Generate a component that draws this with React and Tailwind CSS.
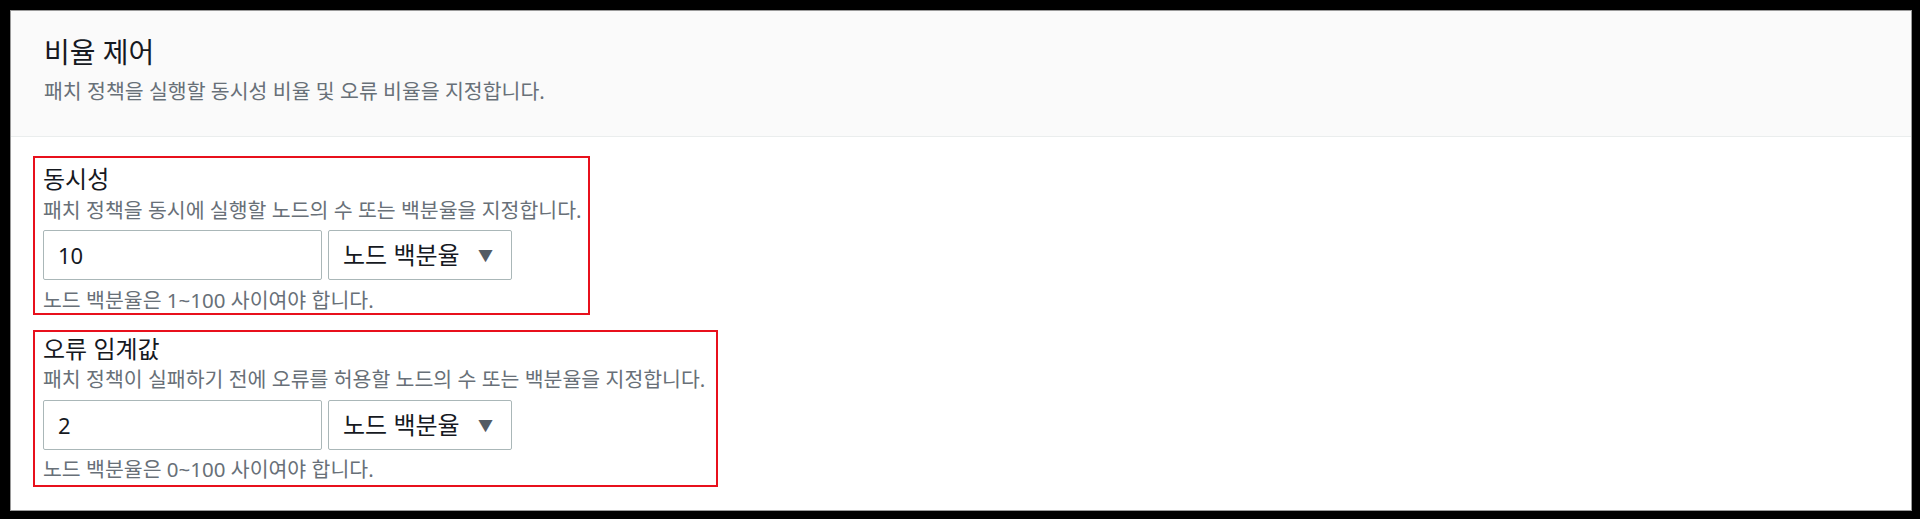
import React from 'react';

const font = { fontFamily: '"Noto Sans", "Noto Sans CJK KR", sans-serif' };

function Field({ width, spacing, label, description, value, hint }) {
  return (
    <div className={`${width} ${spacing.box} border-2 border-[#e8101c] pl-[8px]`}>
      <div className="text-[24px] leading-[30px] text-[#16191f]">{label}</div>
      <div className={`${spacing.desc} text-[20.5px] leading-[26px] text-[#687078]`}>{description}</div>
      <div className={`${spacing.input} flex gap-[6px]`}>
        <div className="w-[279px] h-[50px] border border-[#aab7b8] rounded-[2px] bg-white flex items-center pl-[14px] text-[22px] text-[#16191f]">
          {value}
        </div>
        <div className="w-[184px] h-[50px] border border-[#aab7b8] rounded-[2px] bg-white flex items-center justify-between pl-[14px] pr-[18px] text-[24px] text-[#16191f]">
          <span>노드 백분율</span>
          <span className="text-[15px] text-[#545b64]">▼</span>
        </div>
      </div>
      <div className={`${spacing.hint} text-[20.5px] leading-[26px] text-[#687078]`}>{hint}</div>
    </div>
  );
}

export default function App() {
  return (
    <div className="h-[519px] bg-black pt-[10px] pl-[10px] pr-[8px] pb-[8px]" style={font}>
      <div className="h-full border border-[#9a9a9a] bg-white flex flex-col">
        {/* Header */}
        <div className="bg-[#fafafa] border-b border-[#eaeded] pl-[33px] pt-[23px] pb-[32px]">
          <h2 className="text-[28px] leading-[36px] text-[#16191f]">비율 제어</h2>
          <p className="mt-[8px] text-[20.5px] leading-[26px] text-[#687078]">
            패치 정책을 실행할 동시성 비율 및 오류 비율을 지정합니다.
          </p>
        </div>

        {/* Body */}
        <div className="pl-[22px] pt-[19px] flex flex-col gap-[15px]">
          <Field
            width="w-[557px]"
            spacing={{ box: 'pt-[6px] pb-0', desc: 'mt-[3px]', input: 'mt-[7px]', hint: 'mt-[7px]' }}
            label="동시성"
            description="패치 정책을 동시에 실행할 노드의 수 또는 백분율을 지정합니다."
            value="10"
            hint="노드 백분율은 1~100 사이여야 합니다."
          />
          <Field
            width="w-[685px]"
            spacing={{ box: 'pt-[2px] pb-[3px]', desc: 'mt-[2px]', input: 'mt-[8px]', hint: 'mt-[6px]' }}
            label="오류 임계값"
            description="패치 정책이 실패하기 전에 오류를 허용할 노드의 수 또는 백분율을 지정합니다."
            value="2"
            hint="노드 백분율은 0~100 사이여야 합니다."
          />
        </div>
      </div>
    </div>
  );
}
